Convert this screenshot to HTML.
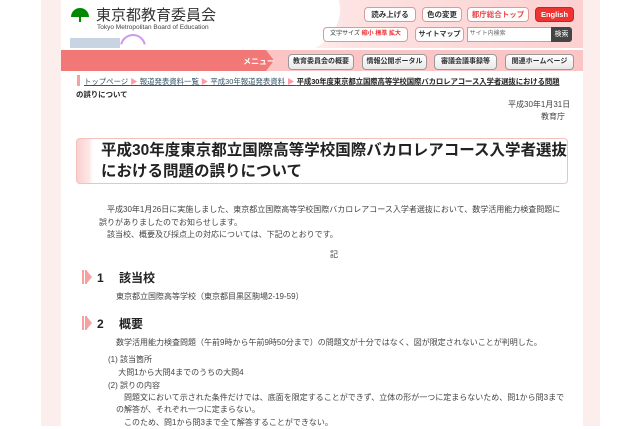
<!DOCTYPE html><html><head><meta charset="utf-8"><style>
body{margin:0;width:640px;height:426px;overflow:hidden;background:#fff;font-family:"Liberation Sans","Noto Sans CJK JP",sans-serif;color:#333;position:relative}
.abs{position:absolute}
.side{position:absolute;top:0;height:426px;background:#fdeeee}
.btn{position:absolute;background:#fff;border:1px solid #d99;border-radius:4px;font-size:7.5px;font-weight:bold;text-align:center;line-height:13px;height:13px;white-space:nowrap;overflow:hidden}
.mb{position:absolute;top:54px;height:14px;background:linear-gradient(#fff,#e8e8e8);border:1px solid #999;border-radius:4px;font-size:7px;font-weight:bold;line-height:14px;text-align:center;color:#333;white-space:nowrap;overflow:hidden}
.t{font-size:8px;position:absolute;white-space:nowrap}
.h2bar{position:absolute;width:5px;height:14px;background:linear-gradient(90deg,#f6a0a0 0 2px,#fff 2px 3px,#f6a0a0 3px)}
</style></head><body>
<div class="side" style="left:41px;width:20px"></div>
<div class="side" style="left:583px;width:17px"></div>
<div class="abs" style="left:61px;top:0;width:522px;height:48px;background:linear-gradient(90deg,#fff 0,#fff 38%,#fde3e3 55%,#fcd0d0 100%)"></div>
<div class="abs" style="left:200px;top:-40px;width:140px;height:100px;border-radius:50%;background:#fff"></div>
<div class="abs" style="left:71px;top:8px;width:18px;height:9px;background:#080;border-radius:9px 9px 0 0"></div>
<div class="abs" style="left:79px;top:16px;width:2px;height:6px;background:#080"></div>
<div class="t" style="left:96px;top:4px;font-size:15px;color:#333">東京都教育委員会</div>
<div class="t" style="left:97px;top:24px;font-size:6.5px;color:#444">Tokyo Metropolitan Board of Education</div>
<div class="abs" style="left:70px;top:38px;width:50px;height:10px;background:#c9d4e2"></div>
<div class="abs" style="left:120px;top:34px;width:22px;height:22px;border:2px solid #c9e;border-radius:50%;clip-path:inset(0 0 60% 0)"></div>
<div class="btn" style="left:364px;top:7px;width:50px">読み上げる</div>
<div class="btn" style="left:422px;top:7px;width:38px">色の変更</div>
<div class="btn" style="left:467px;top:7px;width:60px;color:#e44">都庁総合トップ</div>
<div class="btn" style="left:535px;top:7px;width:37px;background:#e33;color:#fff;border-color:#c22">English</div>
<div class="btn" style="left:323px;top:27px;width:83px;font-size:6px;font-weight:normal"><span>文字サイズ</span> <b style="color:#e33">縮小 標準 拡大</b></div>
<div class="btn" style="left:415px;top:27px;width:47px;font-size:7px">サイトマップ</div>
<div class="abs" style="left:467px;top:27px;width:84px;height:13px;background:#fff;border:1px solid #aaa;font-size:6px;line-height:13px;color:#666">&nbsp;サイト内検索</div>
<div class="abs" style="left:551px;top:27px;width:21px;height:15px;background:#444;color:#fff;font-size:7px;line-height:15px;text-align:center;border-radius:0 3px 3px 0">検索</div>
<div class="abs" style="left:61px;top:50px;width:522px;height:21px;background:#fbc5c5"></div>
<div class="abs" style="left:61px;top:50px;width:213px;height:21px;background:#f27878;clip-path:polygon(0 0,205px 0,213px 50%,205px 100%,0 100%)"></div>
<div class="t" style="left:243px;top:56px;color:#fff;font-weight:bold">メニュー</div>
<div class="mb" style="left:288px;width:64px">教育委員会の概要</div>
<div class="mb" style="left:362px;width:63px">情報公開ポータル</div>
<div class="mb" style="left:434px;width:61px">審議会議事録等</div>
<div class="mb" style="left:505px;width:67px">関連ホームページ</div>
<div class="abs" style="left:77px;top:75px;width:3px;height:11px;background:#f6a0a0"></div>
<div class="t" style="left:84px;top:76px;font-size:7.4px;color:#356;text-decoration:underline">トップページ <span style="color:#f9a">▶</span> 報道発表資料一覧 <span style="color:#f9a">▶</span> 平成30年報道発表資料 <span style="color:#f9a;text-decoration:none">▶</span> <b style="color:#222;text-decoration:none;letter-spacing:-0.1px">平成30年度東京都立国際高等学校国際バカロレアコース入学者選抜における問題</b></div>
<div class="t" style="left:76px;top:89px;font-size:7.4px;font-weight:bold;color:#222">の誤りについて</div>
<div class="t" style="left:508px;top:99px;color:#444">平成30年1月31日</div>
<div class="t" style="left:541px;top:111px;color:#444">教育庁</div>
<div class="abs" style="left:76px;top:138px;width:490px;height:44px;border:1px solid #f3c0c0;border-radius:4px;background:linear-gradient(90deg,#fcd0d0 0,#fde6e6 12px,#fff 16px)"></div>
<div class="t" style="left:101px;top:140px;font-size:15.5px;font-weight:bold;color:#222;line-height:21px">平成30年度東京都立国際高等学校国際バカロレアコース入学者選抜<br>における問題の誤りについて</div>
<div class="t" style="left:99px;top:204px;color:#444;line-height:12.5px">　平成30年1月26日に実施しました、東京都立国際高等学校国際バカロレアコース入学者選抜において、数学活用能力検査問題に<br>誤りがありましたのでお知らせします。<br>　該当校、概要及び採点上の対応については、下記のとおりです。</div>
<div class="t" style="left:330px;top:249px;color:#444">記</div>
<div class="h2bar" style="left:82px;top:270px"></div><div class="abs" style="left:87px;top:271px;border-left:5px solid #f6a0a0;border-top:6px solid transparent;border-bottom:6px solid transparent"></div>
<div class="t" style="left:97px;top:269px;font-size:12px;font-weight:bold;color:#222">1　 該当校</div>
<div class="t" style="left:116px;top:291px;color:#444">東京都立国際高等学校（東京都目黒区駒場2-19-59）</div>
<div class="h2bar" style="left:82px;top:316px"></div><div class="abs" style="left:87px;top:317px;border-left:5px solid #f6a0a0;border-top:6px solid transparent;border-bottom:6px solid transparent"></div>
<div class="t" style="left:97px;top:315px;font-size:12px;font-weight:bold;color:#222">2　 概要</div>
<div class="t" style="left:116px;top:337px;color:#444">数学活用能力検査問題（午前9時から午前9時50分まで）の問題文が十分ではなく、図が限定されないことが判明した。</div>
<div class="t" style="left:108px;top:354px;color:#444;line-height:12.5px">(1) 該当箇所<br>　 大問1から大問4までのうちの大問4</div>
<div class="t" style="left:108px;top:380px;color:#444;line-height:12.5px">(2) 誤りの内容</div>
<div class="t" style="left:116px;top:392px;color:#444;line-height:12.5px">　問題文において示された条件だけでは、底面を限定することができず、立体の形が一つに定まらないため、問1から問3まで</div>
<div class="t" style="left:116px;top:404px;color:#444;line-height:12.5px">の解答が、それぞれ一つに定まらない。<br>　このため、問1から問3まで全て解答することができない。</div>
</body></html>
